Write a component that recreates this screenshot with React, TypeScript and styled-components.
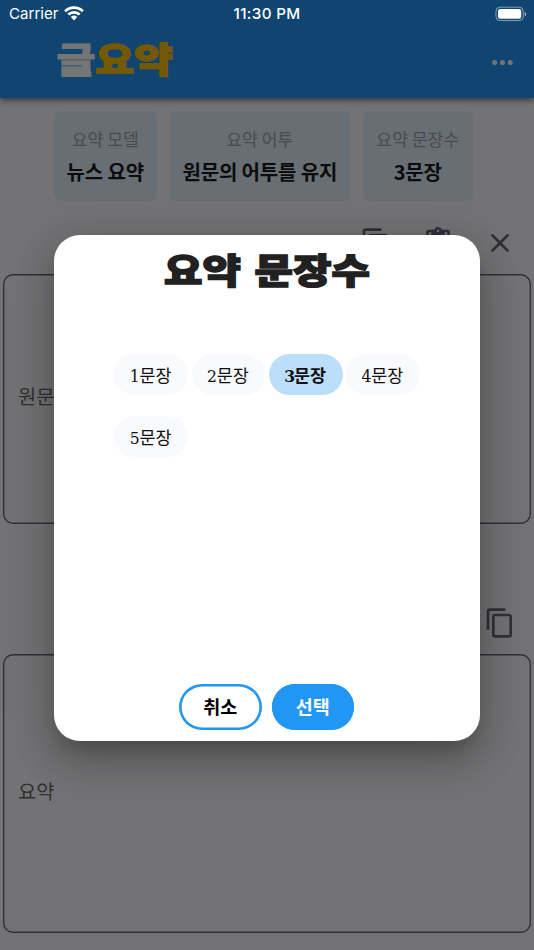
import React from "react";
import styled, { createGlobalStyle, css } from "styled-components";
import { MdClose, MdContentCopy, MdContentPaste, MdMoreHoriz } from "react-icons/md";

const sans = `"Noto Sans CJK KR", sans-serif`;

const GlobalStyle = createGlobalStyle`
  *, *::before, *::after { box-sizing: border-box; }
  body { margin: 0; background: #fafafe; font-family: ${sans}; }
  button { font: inherit; border: 0; padding: 0; background: none; }
`;

const Screen = styled.div`
  position: relative;
  display: flex;
  flex-direction: column;
  width: 534px;
  height: 950px;
  overflow: hidden;
  background: #fafafe;
`;

const AppBar = styled.header`
  display: flex;
  flex: none;
  align-items: center;
  justify-content: space-between;
  height: 98px;
  padding: 26px 16px 0 56.5px;
  background: #2196f3;
  box-shadow: 0 2px 5px rgba(0, 0, 0, 0.35), 0 4px 6px rgba(0, 0, 0, 0.18);
  svg { display: block; color: #fff; }
`;

const Logo = styled.h1`
  margin: -9px 0 0;
  font-size: 42.2px;
  font-weight: 900;
  line-height: 60px;
  color: #ffc107;
  transform: scaleY(0.84);
  -webkit-text-stroke: 1.8px currentColor;
`;

const LogoLead = styled.span`
  color: #fff;
  -webkit-text-stroke-width: 1px;
`;

const Settings = styled.section`
  display: flex;
  flex: none;
  gap: 13px;
  height: 90px;
  margin: 13px 0 0 54.3px;
`;

const SettingCard = styled.div<{ $width: number }>`
  display: flex;
  flex-direction: column;
  align-items: center;
  width: ${(p) => p.$width}px;
  padding: 14px 1px 0 0;
  border-radius: 6px;
  background: #e1f0fc;
  white-space: nowrap;
`;

const SettingLabel = styled.span`
  font-size: 17.2px;
  line-height: 28px;
  color: #a3a3a6;
`;

const SettingValue = styled.strong`
  margin-top: 5px;
  font-size: 20px;
  font-weight: 700;
  line-height: 28px;
  letter-spacing: -0.15px;
  color: #1c1c1e;
`;

const Tools = styled.div<{ $top: number }>`
  display: flex;
  flex: none;
  justify-content: flex-end;
  gap: 30px;
  height: 32px;
  margin-top: ${(p) => p.$top}px;
  padding-right: 18px;
  color: #6a6b76;
`;

const TextArea = styled.div<{ $height: number; $top: number }>`
  display: flex;
  flex: none;
  align-items: center;
  height: ${(p) => p.$height}px;
  margin: ${(p) => p.$top}px 3px 0;
  padding: 0 15px 6px;
  border-radius: 10px;
  box-shadow: inset 0 0 0 1.4px #696a78;
  font-size: 19.8px;
  line-height: 28px;
  color: #6b6b70;
`;

const Scrim = styled.div`
  position: absolute;
  inset: 0;
  background: rgba(0, 0, 0, 0.54);
`;

const StatusBar = styled.div`
  position: absolute;
  inset: 0 0 auto;
  display: grid;
  grid-template-columns: 1fr auto 1fr;
  align-items: center;
  height: 27px;
  padding: 0 7px 0 9px;
  font: 400 15.1px/25px Inter, sans-serif;
  color: #fff;
`;

const Carrier = styled.div`
  display: flex;
  align-items: center;
  gap: 6px;
`;

const Clock = styled.span`
  margin-left: -2px;
  font-weight: 500;
  font-size: 15.2px;
  letter-spacing: 0.35px;
`;

const BatteryIcon = styled.svg`
  justify-self: end;
`;

const Dialog = styled.div`
  position: absolute;
  left: 53.7px;
  top: 235.3px;
  display: flex;
  flex-direction: column;
  align-items: center;
  width: 426.6px;
  height: 505.4px;
  border-radius: 26px;
  background: #fff;
  box-shadow: 0 14px 20px -8px rgba(0, 0, 0, 0.2), 0 22px 40px 3px rgba(0, 0, 0, 0.14),
    0 9px 46px 8px rgba(0, 0, 0, 0.12);
`;

const DialogTitle = styled.h2`
  margin: 4px 0 0;
  font-size: 41.8px;
  font-weight: 900;
  line-height: 60px;
  word-spacing: 4px;
  color: #212121;
  transform: scaleY(0.84);
  -webkit-text-stroke: 1.8px currentColor;
`;

const Options = styled.div`
  display: flex;
  flex-wrap: wrap;
  gap: 21px 3.7px;
  width: 306px;
  margin: 54.7px 0 0 1px;
`;

const Option = styled.button<{ $selected?: boolean }>`
  width: 73.6px;
  height: 41px;
  padding-right: 1.5px;
  border-radius: 21px;
  background: ${(p) => (p.$selected ? "#bbdefb" : "#f8fafd")};
  font-size: 17.4px;
  line-height: 41px;
  color: #111;
  ${(p) => p.$selected && css`font-weight: 700;`}
`;

const Digit = styled.span`
  display: inline-block;
  width: 9.8px;
  font-family: "DejaVu Serif", serif;
  font-stretch: condensed;
  font-size: 17.4px;
`;

const Actions = styled.div`
  display: flex;
  gap: 10px;
  margin: auto 0 10.5px;
`;

const ActionButton = styled.button<{ $filled?: boolean }>`
  width: 82.5px;
  height: 46px;
  border-radius: 23px;
  box-shadow: inset 0 0 0 2.6px #2196f3;
  background: ${(p) => (p.$filled ? "#2196f3" : "#fff")};
  color: ${(p) => (p.$filled ? "#fff" : "#000")};
  font-size: 18.5px;
  font-weight: 700;
  line-height: 44px;
  padding: 0 1px 2px 0;
`;

const settings = [
  { label: "요약 모델", value: "뉴스 요약", width: 103 },
  { label: "요약 어투", value: "원문의 어투를 유지", width: 180 },
  { label: "요약 문장수", value: "3문장", width: 110 },
];

const Wifi = () => (
  <svg width="20" height="15" viewBox="0 0 20 15" fill="none" stroke="#fff" strokeWidth="2.7">
    <path d="M1.1 5.2a12.8 12.8 0 0 1 17.8 0" />
    <path d="M4.3 8.6a8.3 8.3 0 0 1 11.4 0" />
    <path d="M6.8 11.1a4.7 4.7 0 0 1 6.4 0L10 14.4Z" fill="#fff" stroke="none" />
  </svg>
);

const Battery = () => (
  <BatteryIcon width="32" height="16" viewBox="0 0 32 16">
    <rect x="1" y="1.2" width="27.2" height="13.4" rx="4" fill="none" stroke="#fff" strokeOpacity=".5" />
    <rect x="3" y="3.1" width="23.2" height="9.6" rx="2.2" fill="#fff" />
    <path d="M29.7 5.7c2 .8 2 3.8 0 4.6Z" fill="#fff" fillOpacity=".55" />
  </BatteryIcon>
);

export default function App() {
  return (
    <>
      <GlobalStyle />
      <Screen>
        <AppBar>
          <Logo>
            <LogoLead>글</LogoLead>요약
          </Logo>
          <MdMoreHoriz size={31} />
        </AppBar>
        <Settings>
          {settings.map((s) => (
            <SettingCard key={s.label} $width={s.width}>
              <SettingLabel>{s.label}</SettingLabel>
              <SettingValue>{s.value}</SettingValue>
            </SettingCard>
          ))}
        </Settings>
        <Tools $top={26}>
          <MdContentCopy size={32} />
          <MdContentPaste size={32} />
          <MdClose size={32} />
        </Tools>
        <TextArea $height={250} $top={15}>원문</TextArea>
        <Tools $top={83}>
          <MdContentCopy size={32} />
        </Tools>
        <TextArea $height={279} $top={15}>요약</TextArea>
        <Scrim />
        <StatusBar>
          <Carrier>
            Carrier <Wifi />
          </Carrier>
          <Clock>11:30 PM</Clock>
          <Battery />
        </StatusBar>
        <Dialog role="dialog">
          <DialogTitle>요약 문장수</DialogTitle>
          <Options>
            {[1, 2, 3, 4, 5].map((n) => (
              <Option key={n} $selected={n === 3}>
                <Digit>{n}</Digit>문장
              </Option>
            ))}
          </Options>
          <Actions>
            <ActionButton>취소</ActionButton>
            <ActionButton $filled>선택</ActionButton>
          </Actions>
        </Dialog>
      </Screen>
    </>
  );
}
